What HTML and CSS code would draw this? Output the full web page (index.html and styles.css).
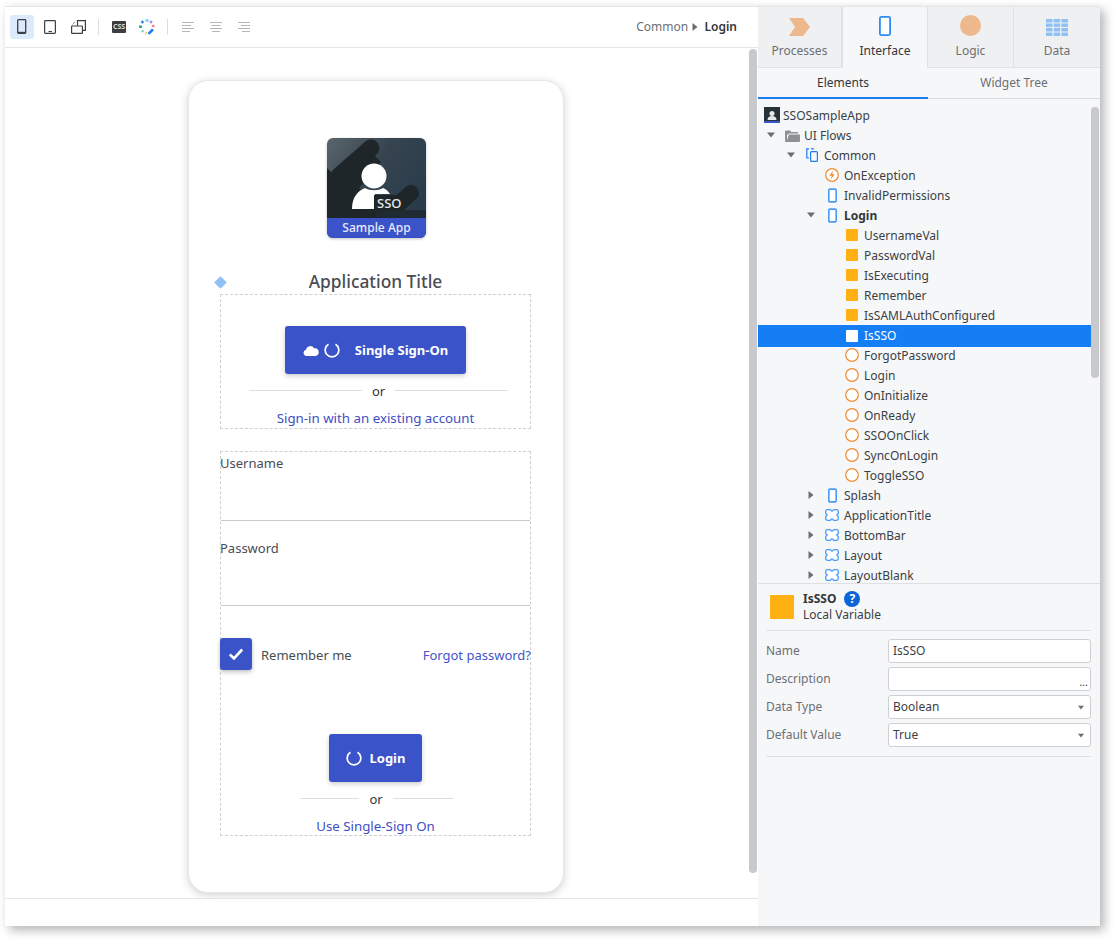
FILE: index.html
```html
<!DOCTYPE html>
<html lang="en">
<head>
    <meta charset="UTF-8">
    <title>Login - Interface</title>
    <link rel="stylesheet" href="styles.css">
</head>
<body>
    <svg class="defs" width="0" height="0">
        <symbol id="i-phone" viewBox="0 0 10 16"><rect x="0.900" y="0.900" width="8.200" height="14.200" rx="1.200" fill="#fff" stroke="#4a9bf5" stroke-width="1.800"/></symbol>
        <symbol id="i-block" viewBox="0 0 14 12"><path d="M2.500 0.700H5c.5 0 .8.300 1 .8.200.5.500.7 1 .7s.8-.2 1-.7c.2-.5.5-.8 1-.8h2.500c1 0 1.800.8 1.800 1.800v1.700c0 .5-.3.800-.8 1-.5.200-.7.400-.7.800s.2.600.7.800c.5.200.8.500.8 1v1.700c0 1-.8 1.800-1.800 1.800H9c-.5 0-.8-.3-1-.8-.2-.5-.5-.7-1-.7s-.8.200-1 .7c-.2.500-.5.800-1 .8H2.500c-1 0-1.800-.8-1.800-1.800V7.800c0-.5.300-.8.800-1 .5-.2.700-.4.700-.8s-.2-.6-.7-.8c-.5-.2-.8-.5-.8-1V2.500c0-1 .8-1.800 1.800-1.800z" fill="#fff" stroke="#4a9bf5" stroke-width="1.300"/></symbol>
        <symbol id="i-circle" viewBox="0 0 14 14"><circle cx="7" cy="7" r="6.300" fill="#fff" stroke="#ee8a2e" stroke-width="1.200"/></symbol>
        <symbol id="i-spin" viewBox="0 0 16 16"><path d="M4.500 2.300A6.800 6.800 0 1 0 11.500 2.300" fill="none" stroke="#fff" stroke-width="1.700"/></symbol>
        <symbol id="i-right" viewBox="0 0 6 8"><path d="M0.500 0L5.500 4L0.500 8z" fill="#6a6d72"/></symbol>
        <symbol id="i-down" viewBox="0 0 8 6"><path d="M0 0.500H8L4 5.500z" fill="#6a6d72"/></symbol>
    </svg>

    <div class="window">
        <!-- canvas -->
        <div class="canvas-pane">
            <div class="toolbar">
                <div class="tool tool-on">
                    <svg width="10" height="16" viewBox="0 0 10 16"><rect x="0.700" y="0.700" width="8" height="13.600" rx="0.800" fill="none" stroke="#3c3f44" stroke-width="1.300"/><path d="M1 12.800h7.500v1.500H1z" fill="#3c3f44"/></svg>
                </div>
                <div class="tool">
                    <svg width="12" height="14" viewBox="0 0 12 14"><rect x="0.600" y="0.600" width="10.800" height="12.800" rx="0.800" fill="none" stroke="#3c3f44" stroke-width="1.200"/><path d="M4.500 11h3.500v1H4.500z" fill="#3c3f44"/></svg>
                </div>
                <div class="tool">
                    <svg width="15" height="14" viewBox="0 0 15 14"><rect x="0.600" y="6" width="10.800" height="7.400" rx="0.500" fill="#fff" stroke="#3c3f44" stroke-width="1.200"/><path d="M6.500 5.800V0.600h7.900v9.800h-3" fill="none" stroke="#3c3f44" stroke-width="1.200"/><path d="M1.500 4.500L4 2" fill="none" stroke="#8a8c90" stroke-width="1"/></svg>
                </div>
                <span class="tool-sep"></span>
                <div class="tool">
                    <span class="css-chip">CSS</span>
                </div>
                <div class="tool">
                    <svg width="16" height="16" viewBox="0 0 16 16" fill="none" stroke-width="2.600">
                        <path d="M6.500 1.500h3" stroke="#6fd0f5"/>
                        <path d="M11 2.200l2 1.500" stroke="#a78be0"/>
                        <path d="M14 6l0.500 2" stroke="#ee7f68"/>
                        <path d="M1.500 6.500v2.500" stroke="#1f9e6e"/>
                        <path d="M2.500 3.800l1.800-1.500" stroke="#2e7fdc"/>
                        <path d="M2.800 11.500l1.800 1.300" stroke="#7fdcb0"/>
                        <path d="M6.300 14.300l1.500 0.300" stroke="#f2cf60"/>
                        <path d="M9.500 14.800l4.500-4.500" stroke="#1a7cf0"/>
                    </svg>
                </div>
                <span class="tool-sep tool-sep-b"></span>
                <div class="tool">
                    <svg width="12" height="12" viewBox="0 0 12 12" fill="none" stroke="#b5b7ba"><path d="M0 1.500h12M0 4.500h9M0 7.500h12M0 10.500h8"/></svg>
                </div>
                <div class="tool">
                    <svg width="12" height="12" viewBox="0 0 12 12" fill="none" stroke="#b5b7ba"><path d="M0 1.500h12M1.500 4.500h9M0 7.500h12M2 10.500h8"/></svg>
                </div>
                <div class="tool">
                    <svg width="12" height="12" viewBox="0 0 12 12" fill="none" stroke="#b5b7ba"><path d="M0 1.500h12M3 4.500h9M0 7.500h12M4 10.500h8"/></svg>
                </div>
                <div class="crumbs">Common <svg width="6" height="8"><use href="#i-right"/></svg> <b>Login</b></div>
            </div>

            <div class="stage">
                <div class="phone">
                    <div class="logo">
                        <svg class="logo-art" width="99" height="80" viewBox="0 0 99 80">
                            <path d="M12 38L44 10" fill="none" stroke="#1f2629" stroke-width="17" stroke-linecap="round"/>
                            <path d="M0 30L12 42L46 16L54 24L32 50L62 80H0z" fill="#1f2629"/>
                            <path d="M56 80L84 55" fill="none" stroke="#1f2629" stroke-width="16" stroke-linecap="round"/>
                            <path d="M50 72H99V80H50z" fill="#1f2a33"/>
                            <circle cx="47" cy="38" r="12.500" fill="#fff"/>
                            <path d="M25 71c0-12 6-18 13-21 5 3 13 3 18 0 3 1 5 3 7 6H48v15z" fill="#fff"/>
                        </svg>
                        <span class="logo-sso">SSO</span>
                        <div class="logo-bar">Sample App</div>
                    </div>
                    <div class="app-title">
                        <span class="diamond"></span>
                        Application Title
                    </div>

                    <div class="dash-box sso-box">
                        <a class="btn btn-sso">
                            <svg class="cloud" width="16" height="11" viewBox="0 0 16 11"><path d="M3.500 11a3.200 3.200 0 0 1-0.500-6.300A4.300 4.300 0 0 1 11 3.300a3.900 3.900 0 0 1 1.500 7.700z" fill="#fff"/></svg>
                            <svg class="spin" width="16" height="16"><use href="#i-spin"/></svg>
                            <span class="btn-gap">Single Sign-On</span>
                        </a>
                        <div class="or or-wide"><span>or</span></div>
                        <a class="link link-wide">Sign-in with an existing account</a>
                    </div>

                    <div class="dash-box login-box">
                        <div class="field">Username</div>
                        <div class="field field-pw">Password</div>
                        <div class="options">
                            <span class="check">
                                <svg width="16" height="14" viewBox="0 0 16 14"><path d="M1.800 7.500L6 11.500L14.200 2.500" fill="none" stroke="#fff" stroke-width="2.600"/></svg>
                            </span>
                            <span class="remember">Remember me</span>
                            <a class="forgot">Forgot password?</a>
                        </div>
                        <a class="btn btn-login">
                            <svg class="spin" width="16" height="16"><use href="#i-spin"/></svg>
                            <span>Login</span>
                        </a>
                        <div class="or or-narrow"><span>or</span></div>
                        <a class="link link-narrow">Use Single-Sign On</a>
                    </div>
                </div>
                <div class="stage-scroll"></div>
            </div>
            <div class="statusbar"></div>
        </div>

        <!-- right side -->
        <div class="side">
            <div class="tabs">
                <div class="tab tab-processes">
                    <svg width="21" height="18" viewBox="0 0 21 18"><path d="M0 0H14L21 9L14 18H0L6 9z" fill="#edb98c"/></svg>
                    <span>Processes</span>
                </div>
                <div class="tab tab-on">
                    <svg width="12" height="20" viewBox="0 0 12 20"><rect x="0.900" y="0.900" width="10.200" height="18.200" rx="1.500" fill="#fff" stroke="#2b8cf0" stroke-width="1.800"/></svg>
                    <span>Interface</span>
                </div>
                <div class="tab">
                    <svg width="21" height="21" viewBox="0 0 21 21"><circle cx="10.500" cy="10.500" r="10.500" fill="#edb98c"/></svg>
                    <span>Logic</span>
                </div>
                <div class="tab">
                    <svg width="22" height="17" viewBox="0 0 22 17" fill="#8fc1f5"><path d="M0 0h6.500v3.500H0zM7.700 0h6.500v3.500H7.700zM15.400 0H22v3.500h-6.600zM0 4.500h6.500V8H0zM7.700 4.500h6.500V8H7.700zM15.400 4.500H22V8h-6.600zM0 9h6.500v3.500H0zM7.700 9h6.500v3.500H7.700zM15.400 9H22v3.500h-6.600zM0 13.500h6.500V17H0zM7.700 13.500h6.500V17H7.700zM15.400 13.500H22V17h-6.600z"/></svg>
                    <span>Data</span>
                </div>
            </div>
            <div class="subtabs">
                <div class="subtab subtab-on">Elements</div>
                <div class="subtab">Widget Tree</div>
            </div>

            <div class="tree">
                <div class="row row-root">
                    <svg class="root-icon" width="16" height="16" viewBox="0 0 16 16"><rect width="16" height="16" fill="#263238"/><circle cx="8" cy="6.500" r="2.500" fill="#e8e8e8"/><path d="M3.500 13c0-3 2-4 4.500-4s4.500 1 4.500 4z" fill="#e8e8e8"/><rect y="14" width="16" height="2" fill="#3a53c9"/></svg>
                    <span>SSOSampleApp</span>
                </div>
                <div class="row lv1">
                    <span class="toggle"><svg width="8" height="6"><use href="#i-down"/></svg></span>
                    <span class="ico"><svg width="15" height="13" viewBox="0 0 15 13"><path d="M0 2.500a1 1 0 0 1 1-1h4l1.200 1.500H13v1.500H4L2 6v7H1a1 1 0 0 1-1-1z" fill="#8e9094"/><path d="M1.500 13L3.800 5.500H15V12a1 1 0 0 1-1 1z" fill="#8e9094"/></svg></span>
                    <span>UI Flows</span>
                </div>
                <div class="row lv2">
                    <span class="toggle"><svg width="8" height="6"><use href="#i-down"/></svg></span>
                    <span class="ico"><svg width="12" height="14" viewBox="0 0 12 14" fill="none" stroke="#1a7cf0" stroke-width="1.200"><path d="M3 0.800H0.800V10H3"/><path d="M5 0.800H8"/><rect x="4.600" y="3.600" width="6.800" height="9.800" rx="1"/></svg></span>
                    <span>Common</span>
                </div>
                <div class="row lv3">
                    <span class="toggle"></span>
                    <span class="ico"><svg width="14" height="14" viewBox="0 0 14 14"><circle cx="7" cy="7" r="6.300" fill="#fff" stroke="#ee8a2e" stroke-width="1.200"/><path d="M8 2.800L4.300 7.800H6.800L5.800 11.200L9.700 6.200H7.200z" fill="#ee8a2e"/></svg></span>
                    <span>OnException</span>
                </div>
                <div class="row lv3">
                    <span class="toggle"></span>
                    <span class="ico"><svg width="9" height="15"><use href="#i-phone"/></svg></span>
                    <span>InvalidPermissions</span>
                </div>
                <div class="row lv3">
                    <span class="toggle"><svg width="8" height="6"><use href="#i-down"/></svg></span>
                    <span class="ico"><svg width="9" height="15"><use href="#i-phone"/></svg></span>
                    <b>Login</b>
                </div>
                <div class="row lv4"><span class="toggle"></span><span class="ico"><span class="var"></span></span><span>UsernameVal</span></div>
                <div class="row lv4"><span class="toggle"></span><span class="ico"><span class="var"></span></span><span>PasswordVal</span></div>
                <div class="row lv4"><span class="toggle"></span><span class="ico"><span class="var"></span></span><span>IsExecuting</span></div>
                <div class="row lv4"><span class="toggle"></span><span class="ico"><span class="var"></span></span><span>Remember</span></div>
                <div class="row lv4"><span class="toggle"></span><span class="ico"><span class="var"></span></span><span>IsSAMLAuthConfigured</span></div>
                <div class="row lv4 row-sel"><span class="toggle"></span><span class="ico"><span class="var var-sel"></span></span><span>IsSSO</span></div>
                <div class="row lv4"><span class="toggle"></span><span class="ico"><svg width="14" height="14"><use href="#i-circle"/></svg></span><span>ForgotPassword</span></div>
                <div class="row lv4"><span class="toggle"></span><span class="ico"><svg width="14" height="14"><use href="#i-circle"/></svg></span><span>Login</span></div>
                <div class="row lv4"><span class="toggle"></span><span class="ico"><svg width="14" height="14"><use href="#i-circle"/></svg></span><span>OnInitialize</span></div>
                <div class="row lv4"><span class="toggle"></span><span class="ico"><svg width="14" height="14"><use href="#i-circle"/></svg></span><span>OnReady</span></div>
                <div class="row lv4"><span class="toggle"></span><span class="ico"><svg width="14" height="14"><use href="#i-circle"/></svg></span><span>SSOOnClick</span></div>
                <div class="row lv4"><span class="toggle"></span><span class="ico"><svg width="14" height="14"><use href="#i-circle"/></svg></span><span>SyncOnLogin</span></div>
                <div class="row lv4"><span class="toggle"></span><span class="ico"><svg width="14" height="14"><use href="#i-circle"/></svg></span><span>ToggleSSO</span></div>
                <div class="row lv3"><span class="toggle"><svg width="6" height="8"><use href="#i-right"/></svg></span><span class="ico"><svg width="9" height="15"><use href="#i-phone"/></svg></span><span>Splash</span></div>
                <div class="row lv3"><span class="toggle"><svg width="6" height="8"><use href="#i-right"/></svg></span><span class="ico"><svg width="14" height="12"><use href="#i-block"/></svg></span><span>ApplicationTitle</span></div>
                <div class="row lv3"><span class="toggle"><svg width="6" height="8"><use href="#i-right"/></svg></span><span class="ico"><svg width="14" height="12"><use href="#i-block"/></svg></span><span>BottomBar</span></div>
                <div class="row lv3"><span class="toggle"><svg width="6" height="8"><use href="#i-right"/></svg></span><span class="ico"><svg width="14" height="12"><use href="#i-block"/></svg></span><span>Layout</span></div>
                <div class="row lv3"><span class="toggle"><svg width="6" height="8"><use href="#i-right"/></svg></span><span class="ico"><svg width="14" height="12"><use href="#i-block"/></svg></span><span>LayoutBlank</span></div>
                <div class="tree-scroll"></div>
            </div>

            <div class="props">
                <div class="props-head">
                    <span class="props-icon"></span>
                    <div class="props-text">
                        <div class="props-name"><b>IsSSO</b><span class="help">?</span></div>
                        <div class="props-kind">Local Variable</div>
                    </div>
                </div>
                <div class="prop-grid">
                    <label>Name</label>
                    <div class="inp">IsSSO</div>
                    <label>Description</label>
                    <div class="inp inp-more">...</div>
                    <label>Data Type</label>
                    <div class="inp inp-sel">Boolean<svg width="6" height="5"><use href="#i-down"/></svg></div>
                    <label>Default Value</label>
                    <div class="inp inp-sel">True<svg width="6" height="5"><use href="#i-down"/></svg></div>
                </div>
            </div>
        </div>
    </div>
</body>
</html>
```

FILE: styles.css
```css
* {
    box-sizing: border-box;
}
html, body {
    margin: 0;
    padding: 0;
    height: 100%;
    overflow: hidden;
}
body {
    background-color: #fff;
    font-family: "Noto Sans", "Open Sans", sans-serif;
    font-size: 12px;
    color: #3c3f44;
    padding: 6px 15px 15px 5px;
}
.defs {
    position: absolute;
}
.window {
    display: flex;
    width: 1095px;
    height: 920px;
    background: #fff;
    border-top: 1px solid #e4e5e7;
    box-shadow: 4px 4px 10px rgba(0, 0, 0, 0.3);
}

/* canvas */
.canvas-pane {
    width: 753px;
    display: flex;
    flex-direction: column;
}
.toolbar {
    height: 41px;
    flex: none;
    display: flex;
    align-items: center;
    padding-left: 5px;
    border-bottom: 1px solid #e4e5e7;
}
.tool {
    width: 24px;
    height: 24px;
    margin-right: 4px;
    border-radius: 3px;
    display: flex;
    align-items: center;
    justify-content: center;
}
.tool-on {
    background-color: #dcebfb;
}
.tool-sep {
    width: 1px;
    height: 16px;
    margin: 0 8px 0 4px;
    background-color: #dcdde0;
}
.tool-sep-b {
    margin-left: 4px;
    margin-right: 8px;
}
.css-chip {
    width: 14px;
    height: 12px;
    background: #3b3d40;
    color: #d8d8d8;
    font-size: 7px;
    font-weight: 700;
    line-height: 12px;
    text-align: center;
    border-radius: 1px;
}
.crumbs {
    margin-left: auto;
    margin-bottom: 2px;
    padding-right: 21px;
    color: #6c6f74;
}
.crumbs svg {
    margin: 0 3px 0 1px;
}
.crumbs b {
    color: #33363a;
    font-weight: 600;
}
.stage {
    flex: 1;
    position: relative;
    overflow: hidden;
    padding: 32px 0 0 183px;
}
.stage-scroll {
    position: absolute;
    top: 1px;
    right: 1px;
    width: 8px;
    height: 824px;
    border-radius: 4px;
    background-color: #c8c9cc;
}
.statusbar {
    height: 28px;
    flex: none;
    border-top: 1px solid #e4e5e7;
}
.phone {
    width: 376px;
    height: 813px;
    padding: 57px 32px 0 31px;
    border: 1px solid #e6e6e8;
    border-radius: 20px;
    background: #fff;
    box-shadow: 0 2px 8px rgba(0, 0, 0, 0.18);
    display: flex;
    flex-direction: column;
    align-items: center;
    font-size: 13px;
    color: #4a4d52;
}
.logo {
    position: relative;
    width: 99px;
    height: 100px;
    flex: none;
    margin-left: 2px;
    border-radius: 6px;
    overflow: hidden;
    background: linear-gradient(125deg, #5a666c 0%, #36444f 40%, #24384a 100%);
    box-shadow: 0 1px 3px rgba(0, 0, 0, 0.25);
}
.logo-art {
    display: block;
}
.logo-sso {
    position: absolute;
    left: 47px;
    top: 57px;
    color: #e8eaec;
    background: #1f2629;
    padding: 0 2px 0 3px;
    font-size: 13px;
    font-weight: 500;
    line-height: 16px;
}
.logo-bar {
    height: 20px;
    background: #3a53c9;
    color: #e8ebfb;
    font-size: 12px;
    font-weight: 500;
    line-height: 19px;
    text-align: center;
}
.app-title {
    position: relative;
    align-self: stretch;
    margin-top: 31px;
    height: 25px;
    font-size: 17.33px;
    font-weight: 500;
    line-height: 25px;
    text-align: center;
}
.diamond {
    position: absolute;
    left: -4px;
    top: 9px;
    width: 9px;
    height: 9px;
    background-color: #8fc1f5;
    transform: rotate(45deg);
}
.dash-box {
    width: 311px;
    border: 1px dashed #cfcfcf;
    display: flex;
    flex-direction: column;
    align-items: center;
}
.sso-box {
    height: 135px;
    padding-top: 31px;
}
.login-box {
    height: 385px;
    margin-top: 22px;
    align-items: stretch;
}
.btn {
    display: flex;
    align-items: center;
    justify-content: center;
    height: 48px;
    background-color: #3a53c9;
    border-radius: 3px;
    color: #fff;
    font-weight: 700;
    box-shadow: 0 2px 5px rgba(0, 0, 0, 0.2);
}
.btn-sso {
    width: 181px;
}
.cloud {
    margin-right: 5px;
}
.btn-gap {
    margin-left: 15px;
}
.btn-login {
    width: 93px;
    align-self: center;
    margin-top: 64px;
    gap: 8px;
}
.or {
    display: flex;
    align-items: center;
    justify-content: center;
    height: 18px;
    color: #33363a;
}
.or::before, .or::after {
    content: "";
    flex: 1;
    height: 1px;
    background-color: #dddde2;
}
.or span {
    margin: 2px 10px 0;
}
.or-wide {
    width: 259px;
    margin-top: 7px;
    margin-left: 6px;
}
.or-narrow {
    align-self: center;
    width: 153px;
    margin-top: 7px;
    margin-left: 1px;
}
.link {
    color: #3f4fc4;
    font-size: 13.3px;
    text-align: center;
    line-height: 18px;
}
.link-wide {
    margin-top: 10px;
}
.link-narrow {
    margin-top: 10px;
}
.field {
    height: 69px;
    border-bottom: 1px solid #c9c9cc;
    line-height: 22px;
    text-indent: -1px;
}
.field-pw {
    height: 85px;
    padding-top: 16px;
}
.options {
    display: flex;
    align-items: center;
    margin-top: 32px;
    height: 32px;
    margin-left: -1px;
}
.check {
    width: 32px;
    height: 32px;
    background-color: #3a53c9;
    border-radius: 3px;
    box-shadow: 0 2px 4px rgba(0, 0, 0, 0.25);
    display: flex;
    align-items: center;
    justify-content: center;
}
.remember {
    margin-left: 9px;
    padding-top: 2px;
}
.forgot {
    margin-left: auto;
    margin-right: -1px;
    padding-top: 2px;
    color: #3f55c9;
}

/* right side */
.side {
    width: 342px;
    background-color: #f6f7f9;
    display: flex;
    flex-direction: column;
}
.tabs {
    display: flex;
    height: 61px;
    flex: none;
}
.tab {
    width: 86px;
    display: flex;
    flex-direction: column;
    align-items: center;
    justify-content: flex-end;
    gap: 6px;
    padding-bottom: 8px;
    background-color: #eff0f2;
    border-bottom: 1px solid #e0e1e4;
    border-right: 1px solid #e0e1e4;
    color: #6c6f74;
}
.tab-processes {
    width: 84px;
}
.tab-on {
    background-color: #f6f7f9;
    border-bottom-color: #f6f7f9;
    border-left: 1px solid #e0e1e4;
    color: #33363a;
}
.tab:last-child {
    flex: 1;
    border-right: none;
}
.subtabs {
    display: flex;
    height: 31px;
    flex: none;
    border-bottom: 1px solid #d9dadd;
}
.subtab {
    flex: 1;
    text-align: center;
    line-height: 29px;
    color: #6c6f74;
}
.subtab-on {
    width: 170px;
    flex: none;
    color: #33363a;
    border-bottom: 2px solid #1a7cf0;
    height: 31px;
}
.tree {
    position: relative;
    height: 485px;
    flex: none;
    padding-top: 6px;
    overflow: hidden;
    border-bottom: 1px solid #dfe0e3;
}
.tree-scroll {
    position: absolute;
    top: 8px;
    right: 1px;
    width: 8px;
    height: 271px;
    border-radius: 4px;
    background-color: #c8c9cc;
}
.row {
    display: flex;
    align-items: center;
    height: 20px;
    margin-right: 9px;
    white-space: nowrap;
    color: #3c3f44;
}
.row b {
    font-weight: 700;
    color: #33363a;
}
.row-root {
    padding-left: 6px;
}
.root-icon {
    margin-right: 3px;
}
.lv1 { padding-left: 6px; }
.lv2 { padding-left: 26px; }
.lv3 { padding-left: 46px; }
.lv4 { padding-left: 66px; }
.toggle {
    width: 14px;
    display: flex;
    align-items: center;
    justify-content: center;
    flex: none;
}
.ico {
    width: 20px;
    margin: 0 2px 0 4px;
    display: flex;
    align-items: center;
    justify-content: center;
    flex: none;
}
.var {
    width: 12px;
    height: 12px;
    background-color: #ffb114;
    border-radius: 1px;
}
.row-sel {
    height: 22px;
    margin-bottom: -2px;
    padding-bottom: 1px;
    background-color: #157ef5;
    color: #fff;
}
.var-sel {
    background-color: #fff;
}
.props {
    padding: 11px 9px 0 8px;
}
.props-head {
    display: flex;
    align-items: flex-start;
    gap: 9px;
    padding-left: 4px;
    height: 36px;
    border-bottom: 1px solid #dfe0e3;
}
.props-icon {
    width: 24px;
    height: 24px;
    background-color: #ffb114;
    border-radius: 1px;
}
.props-text {
    margin-top: -4px;
}
.props-name {
    display: flex;
    align-items: center;
    gap: 8px;
    line-height: 16px;
    color: #33363a;
}
.props-name b {
    font-weight: 700;
}
.help {
    width: 16px;
    height: 16px;
    border-radius: 50%;
    background-color: #0a66d8;
    color: #fff;
    font-size: 12px;
    font-weight: 700;
    line-height: 16px;
    text-align: center;
}
.props-kind {
    line-height: 16px;
}
.prop-grid {
    display: grid;
    grid-template-columns: 122px 1fr;
    row-gap: 4px;
    padding: 8px 0 9px;
    border-bottom: 1px solid #dfe0e3;
}
.prop-grid label {
    color: #6c6f74;
    line-height: 23px;
}
.inp {
    height: 24px;
    background: #fff;
    border: 1px solid #cfd0d3;
    border-radius: 3px;
    padding: 0 4px;
    line-height: 22px;
    color: #3c3f44;
    display: flex;
    align-items: center;
    justify-content: space-between;
}
.inp-more {
    justify-content: flex-end;
    align-items: flex-end;
    line-height: 16px;
    font-size: 11px;
    padding-right: 2px;
}
.inp-sel svg {
    margin-right: 2px;
}
```
